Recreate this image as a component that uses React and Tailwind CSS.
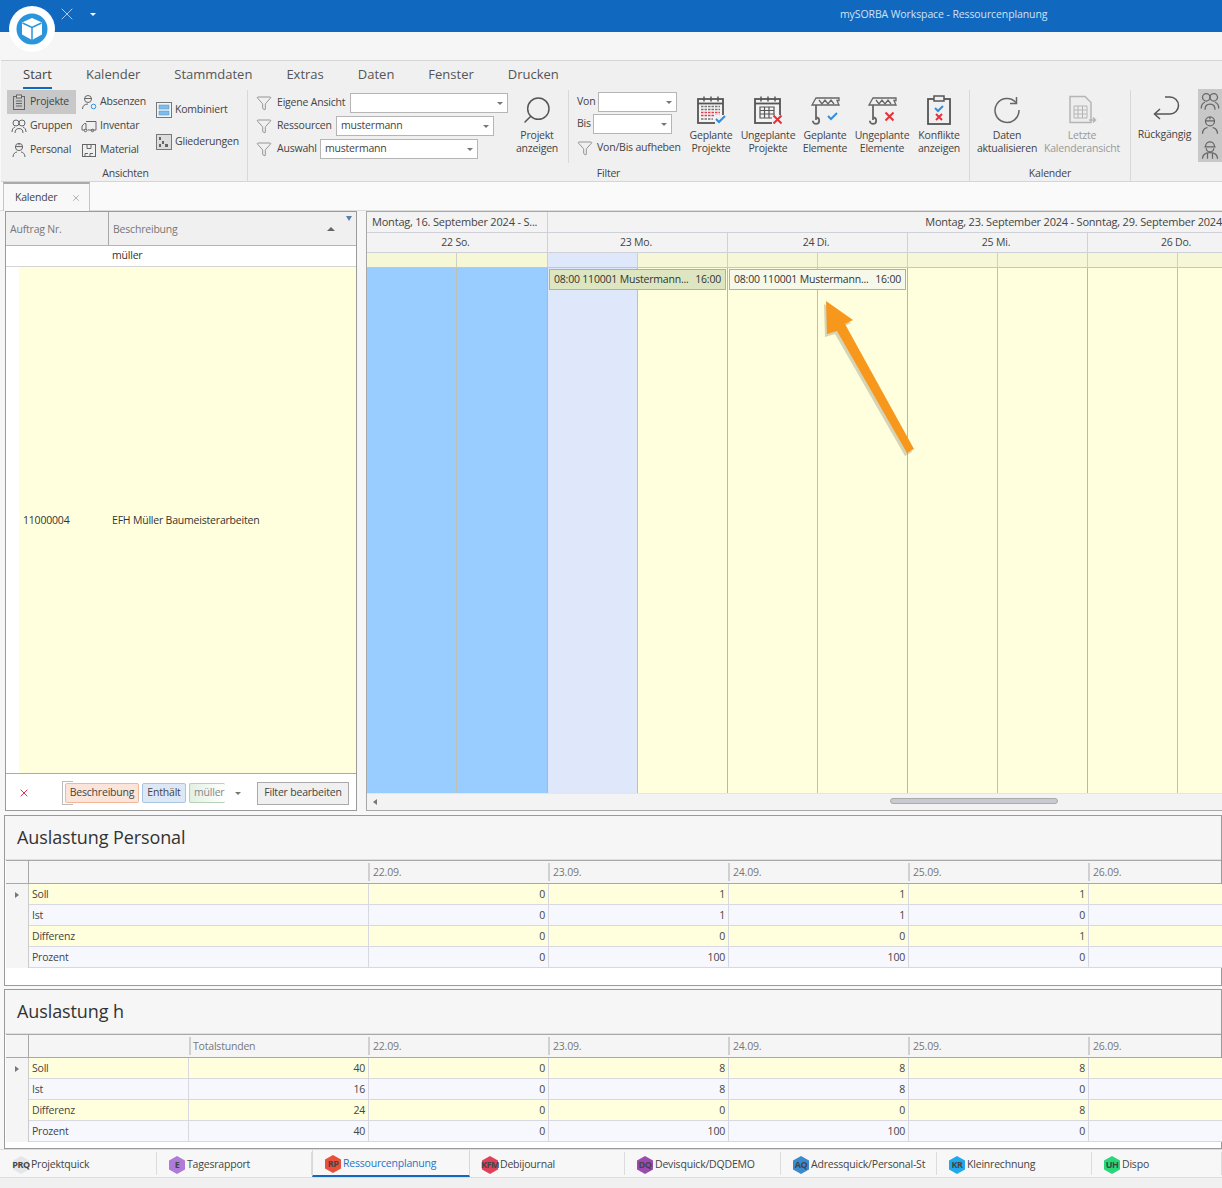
import { Filter, Search, X } from "lucide-react";

function Caret({ className = "" }) {
  return <span className={`w-0 h-0 border-x-[3px] border-x-transparent border-t-[3px] border-t-[#777] ${className}`} />;
}

function Ico({ children, size = 16, className = "" }) {
  return (
    <svg width={size} height={size} viewBox="0 0 16 16" fill="none" stroke="#666" strokeWidth="1" className={`shrink-0 ${className}`}>
      {children}
    </svg>
  );
}

function Person({ size }) {
  return (
    <Ico size={size}>
      <circle cx="8" cy="5" r="3.6" />
      <path d="M4.4 4.6h7.2M8 1.4v2M2 15c0-3.5 2.5-5 4-5M14 15c0-3.5-2.5-5-4-5" />
    </Ico>
  );
}

function Foreman({ size }) {
  return (
    <Ico size={size}>
      <path d="M4.500 5a3.500 3.500 0 0 1 7 0M3.500 5.500h9M5 6.500a3 3 0 0 0 6 0" />
      <path d="M2 15c0-3 2-5 6-5s6 2 6 5M6 10.500V15M10 10.500V15" />
    </Ico>
  );
}

function Group({ size }) {
  return (
    <Ico size={size}>
      <circle cx="5" cy="5" r="3" />
      <circle cx="11" cy="5" r="3" />
      <path d="M1 14c0-3 1.5-4.5 3-5M15 14c0-3-1.500-4.500-3-5M4 15c0-3 1.500-4.500 4-4.500s4 1.500 4 4.500" />
    </Ico>
  );
}

function Clipboard() {
  return (
    <Ico>
      <rect x="2.500" y="2.500" width="11" height="13" />
      <rect x="5.500" y="1" width="5" height="3" fill="#ddd" />
      <path d="M5 7h6M5 9.500h6M5 12h6" />
    </Ico>
  );
}

function Worker() {
  return (
    <Ico>
      <circle cx="7" cy="5" r="3.500" />
      <path d="M3.500 4.500h7M1.500 15c0-3 2-5 5.500-5" />
      <circle cx="12.500" cy="12.500" r="2.300" stroke="#3a8fd6" />
    </Ico>
  );
}

function Truck() {
  return (
    <Ico>
      <path d="M5 3.500h10v8.500H6.500M3.500 12H1V8l2.500-2.500H5V12" />
      <circle cx="4.500" cy="12.500" r="1.300" />
      <circle cx="11.500" cy="12.500" r="1.300" />
    </Ico>
  );
}

function Box() {
  return (
    <Ico>
      <rect x="1.500" y="2.500" width="13" height="12" />
      <path d="M6 2.500v4h4v-4" />
      <path d="M4 14.500v-3h3M9 14.500v-3h3" />
    </Ico>
  );
}

function Combined() {
  return (
    <svg width="16" height="16" viewBox="0 0 16 16" className="shrink-0">
      <rect x="0.500" y="0.500" width="15" height="15" fill="#f4f4f4" stroke="#777" />
      <rect x="3" y="3" width="10" height="4" fill="#7dbcec" stroke="#4a90c8" strokeWidth="0.500" />
      <rect x="3" y="9" width="10" height="4" fill="#7dbcec" stroke="#4a90c8" strokeWidth="0.500" />
    </svg>
  );
}

function Outline() {
  return (
    <svg width="16" height="16" viewBox="0 0 16 16" className="shrink-0">
      <rect x="0.500" y="0.500" width="15" height="15" fill="#ddd" stroke="#777" />
      <path d="M3 3h2v3H3zM6 7h2v3H6zM3 10h2v3H3zM9 10h3v3H9z" fill="#666" />
    </svg>
  );
}

function Mark({ type, x, y }) {
  if (type === "check") return <path d={`M${x - 4} ${y}l3 3 6-6`} stroke="#2f8fe0" strokeWidth="2" fill="none" />;
  return <path d={`M${x - 3.500} ${y - 3.500}l8 8m0-8l-8 8`} stroke="#e8303a" strokeWidth="2" fill="none" />;
}

function Calendar({ dense, mark }) {
  return (
    <svg width="30" height="30" viewBox="0 0 30 30" fill="none" className="shrink-0">
      <rect x="2" y="4" width="25" height="24" stroke="#555" strokeWidth="1.800" fill="#f4f4f4" />
      <path d="M2 8.500h25" stroke="#555" strokeWidth="1.800" />
      <path d="M8 1.500v5M15 1.500v5M22 1.500v5" stroke="#555" strokeWidth="1.500" />
      {dense ? (
        <g>
          <path d="M5 11.500h19M5 14.500h19" stroke="#777" strokeWidth="1.600" strokeDasharray="2.500 1" />
          <path d="M5 17.500h19M5 20.500h19" stroke="#e04050" strokeWidth="1.600" strokeDasharray="2.500 1" />
          <path d="M5 24h12" stroke="#777" strokeWidth="1.600" strokeDasharray="2.500 1" />
        </g>
      ) : (
        <path d="M7 12h14v11H7zM7 15.500h14M7 19h14M11.500 12v11M16 12v11" stroke="#555" strokeWidth="1.200" />
      )}
      <rect x="19" y="20" width="11" height="10" fill="#f0f0f0" />
      <Mark type={mark} x={24} y={24} />
    </svg>
  );
}

function Crane({ mark }) {
  return (
    <svg width="30" height="30" viewBox="0 0 30 30" fill="none" className="shrink-0">
      <path d="M2 10l4-7h23v2.500H27L29 10z" fill="#f0f0f0" stroke="#666" strokeWidth="1.300" />
      <path d="M9 5l3 4 3-4 3 4 3-4 3 4" stroke="#666" strokeWidth="1.300" />
      <path d="M6 10v15" stroke="#666" strokeWidth="1.800" />
      <path d="M6 22.500a3.200 3.200 0 1 1-3.200 3.200" stroke="#666" strokeWidth="1.800" />
      <Mark type={mark} x={22} y={21} />
    </svg>
  );
}

function Conflict() {
  return (
    <svg width="30" height="30" viewBox="0 0 30 30" fill="none" className="shrink-0">
      <rect x="4" y="4" width="22" height="25" stroke="#555" strokeWidth="1.800" />
      <rect x="10" y="1" width="10" height="5" stroke="#555" strokeWidth="1.500" fill="#f0f0f0" />
      <path d="M11 13l3 3 5-5" stroke="#2f8fe0" strokeWidth="2" />
      <path d="M12 19l6 6m0-6l-6 6" stroke="#e8303a" strokeWidth="2" />
    </svg>
  );
}

function Refresh() {
  return (
    <svg width="30" height="30" viewBox="0 0 30 30" fill="none" className="shrink-0">
      <path d="M24 7.500A12 12 0 1 0 27 15" stroke="#666" strokeWidth="1.500" />
      <path d="M24.500 2v6.500H18" stroke="#666" strokeWidth="1.500" />
    </svg>
  );
}

function LastView() {
  return (
    <svg width="30" height="30" viewBox="0 0 30 30" fill="none" className="shrink-0">
      <path d="M3 1.500h15l6 6v20H3z" stroke="#b5b5b5" strokeWidth="1.500" fill="#ededed" />
      <path d="M7 11h13v12H7zM7 15h13M7 19h13M11 11v12M15.500 11v12" stroke="#b5b5b5" />
      <path d="M22 25h6m-2-2.500l2.500 2.500-2.500 2.500" stroke="#b5b5b5" strokeWidth="1.500" />
    </svg>
  );
}

function Undo() {
  return (
    <svg width="30" height="30" viewBox="0 0 30 30" fill="none" className="shrink-0">
      <path d="M15 3h5a6.500 6.500 0 0 1 0 17H5" stroke="#555" strokeWidth="1.500" />
      <path d="M10 15l-5.500 5 5.500 5" stroke="#555" strokeWidth="1.500" />
    </svg>
  );
}

function SmallBtn({ icon, label, active, width }) {
  return (
    <div className={`flex items-center gap-[3px] h-6 pl-1 ${width} ${active ? "bg-[#c8c8c8]" : ""}`}>
      {icon}
      <span className="whitespace-nowrap">{label}</span>
    </div>
  );
}

function BigBtn({ icon, lines, width, disabled }) {
  return (
    <div className={`flex flex-col items-center ${width} ${disabled ? "text-[#999]" : ""}`}>
      <div className="h-[34px] flex items-center mt-[3px]">{icon}</div>
      <div className="mt-[2px] leading-[13px] text-center whitespace-nowrap">
        {lines.map((l) => (
          <div key={l}>{l}</div>
        ))}
      </div>
    </div>
  );
}

function Combo({ label, value, labelWidth }) {
  return (
    <div className="flex items-center h-[22px]">
      <Filter size={16} strokeWidth={1} color="#666" className="shrink-0 mr-[5px]" />
      <span className={`mr-[3px] whitespace-nowrap ${labelWidth}`}>{label}</span>
      <div className="h-5 w-[158px] bg-white border border-[#b5b5b5] flex items-center justify-between px-1">
        <span>{value}</span>
        <Caret />
      </div>
    </div>
  );
}

function Ribbon() {
  return (
    <div className="h-[122px] bg-[#f0f0f0] border-y border-[#d5d5d5] ml-px text-[#444] flex flex-col">
      <div className="h-[28px] pl-[22px] flex items-end gap-[34px] text-[13px] tracking-normal text-[#555] shrink-0">
        {["Start", "Kalender", "Stammdaten", "Extras", "Daten", "Fenster", "Drucken"].map((t, i) => (
          <span key={t} className={`pb-[3px] ${i === 0 ? "border-b-2 border-[#1168bf] text-[#444]" : "border-b-2 border-transparent"}`}>
            {t}
          </span>
        ))}
      </div>
      <div className="flex flex-1 pl-[5px]">
        <div className="w-[242px] shrink-0 flex flex-col border-r border-[#d8d8d8] my-[1px]">
          <div className="flex h-[73px] pl-[1px]">
            <div className="w-[69px]">
              <SmallBtn active icon={<Clipboard />} label="Projekte" width="w-[69px]" />
              <SmallBtn icon={<Group />} label="Gruppen" />
              <SmallBtn icon={<Person />} label="Personal" />
            </div>
            <div className="w-[76px] pl-[1px]">
              <SmallBtn icon={<Worker />} label="Absenzen" />
              <SmallBtn icon={<Truck />} label="Inventar" />
              <SmallBtn icon={<Box />} label="Material" />
            </div>
            <div className="flex flex-col gap-2 pt-2">
              <SmallBtn icon={<Combined />} label="Kombiniert" />
              <SmallBtn icon={<Outline />} label="Gliederungen" />
            </div>
          </div>
          <div className="text-center pr-[2px] mt-[3px]">Ansichten</div>
        </div>

        <div className="w-[722px] shrink-0 flex flex-col border-r border-[#d8d8d8] my-[1px]">
          <div className="flex h-[73px]">
            <div className="w-[260px] pl-[8px] pt-[2px] flex flex-col gap-[1px]">
              <Combo label="Eigene Ansicht" labelWidth="w-[70px]" value="" />
              <Combo label="Ressourcen" labelWidth="w-[56px]" value="mustermann" />
              <Combo label="Auswahl" labelWidth="w-[40px]" value="mustermann" />
            </div>
            <BigBtn width="w-[58px]" lines={["Projekt", "anzeigen"]} icon={<Search size={32} strokeWidth={1.1} color="#555" className="-scale-x-100" />} />
            <div className="w-[114px] ml-[2px] border-l border-[#d8d8d8] pl-2 pt-[1px] text-[#444]">
              <div className="flex items-center h-[22px]">
                <span className="w-5">Von</span>
                <div className="h-5 w-[79px] ml-[1px] bg-white border border-[#b5b5b5] flex items-center justify-end px-1"><Caret /></div>
              </div>
              <div className="flex items-center h-[22px]">
                <span className="w-[15px]">Bis</span>
                <div className="h-5 w-[79px] ml-[1px] bg-white border border-[#b5b5b5] flex items-center justify-end px-1"><Caret /></div>
              </div>
              <div className="flex items-center h-[26px] gap-[4px] whitespace-nowrap">
                <Filter size={16} strokeWidth={1} color="#666" className="shrink-0" />
                Von/Bis aufheben
              </div>
            </div>
            <BigBtn width="w-[58px]" lines={["Geplante", "Projekte"]} icon={<Calendar dense mark="check" />} />
            <BigBtn width="w-[56px]" lines={["Ungeplante", "Projekte"]} icon={<Calendar mark="x" />} />
            <BigBtn width="w-[58px]" lines={["Geplante", "Elemente"]} icon={<Crane mark="check" />} />
            <BigBtn width="w-[56px]" lines={["Ungeplante", "Elemente"]} icon={<Crane mark="x" />} />
            <BigBtn width="w-[58px]" lines={["Konflikte", "anzeigen"]} icon={<Conflict />} />
          </div>
          <div className="text-center mt-[3px]">Filter</div>
        </div>

        <div className="w-[161px] shrink-0 flex flex-col border-r border-[#d8d8d8] my-[1px]">
          <div className="flex h-[73px]">
            <BigBtn width="w-[74px]" lines={["Daten", "aktualisieren"]} icon={<Refresh />} />
            <BigBtn disabled width="w-[76px]" lines={["Letzte", "Kalenderansicht"]} icon={<LastView />} />
          </div>
          <div className="text-center mt-[3px]">Kalender</div>
        </div>

        <BigBtn width="w-[67px]" lines={["Rückgängig"]} icon={<Undo />} />
        <div className="flex-1 h-[73px] bg-[#c8c8c8] flex flex-col items-center justify-around">
          <Group size={20} />
          <Person size={20} />
          <Foreman size={20} />
        </div>
      </div>
    </div>
  );
}

function LeftGrid() {
  return (
    <div className="w-[352px] h-[600px] shrink-0 border border-[#9a9a9a] ml-[5px] flex flex-col bg-white">
      <div className="h-[34px] flex bg-[#f0f0f0] border-b border-[#b5b5b5] text-[#777]">
        <div className="w-[103px] border-r border-[#a8a8a8] flex items-center pl-1 pt-[2px]">Auftrag Nr.</div>
        <div className="flex-1 relative flex items-center pl-1 pt-[2px]">
          Beschreibung
          <span className="absolute right-[21px] top-[15px] w-0 h-0 border-x-[4px] border-x-transparent border-b-[4px] border-b-[#666]" />
          <span className="absolute right-1 top-1 w-0 h-0 border-x-[3px] border-x-transparent border-t-[5px] border-t-[#5b7fa8]" />
        </div>
      </div>
      <div className="h-[21px] border-b border-[#d5d5d5] pl-[106px] flex items-center text-[#333]">müller</div>
      <div className="flex-1 flex">
        <div className="w-[13px]" />
        <div className="flex-1 bg-[#ffffdd] flex items-center pt-[2px] text-[#333]">
          <span className="ml-1 w-[89px]">11000004</span>
          <span>EFH Müller Baumeisterarbeiten</span>
        </div>
      </div>
      <div className="h-[37px] border-t border-[#aaa] flex items-center pt-[2px] text-[#444] bg-white">
        <X size={12} color="#e0304a" strokeWidth={2} className="ml-3 mr-[32px]" />
        <div className="h-6 w-[11px] shrink-0 border-l border-y border-[#bbb]" />
        <div className="flex items-center gap-[3px] -ml-[8px]">
          <span className="h-5 w-[74px] flex items-center justify-center border border-[#f0b898] bg-[#fbe5da] rounded-[2px]">Beschreibung</span>
          <span className="h-5 w-[44px] flex items-center justify-center border border-[#a9c4e4] bg-[#dde8f6] rounded-[2px]">Enthält</span>
          <span className="h-5 w-[36px] px-1 flex items-center border border-[#b4d2b4] border-r-0 bg-gradient-to-r from-[#e2f0e2] to-white text-[#888] rounded-[2px]">müller</span>
        </div>
        <Caret className="ml-[10px]" />
        <div className="ml-[16px] h-[23px] w-[92px] border border-[#aaa] bg-[#f0f0f0] flex items-center justify-center whitespace-nowrap">Filter bearbeiten</div>
      </div>
    </div>
  );
}

const days = [
  { label: "22 So.", w: "w-[181px]", a: "bg-[#99ccff]", b: "bg-[#99ccff]" },
  { label: "23 Mo.", w: "w-[180px]", a: "bg-[#dfe7fb]", b: "bg-[#ffffdd]" },
  { label: "24 Di.", w: "w-[180px]", a: "bg-[#ffffdd]", b: "bg-[#ffffdd]" },
  { label: "25 Mi.", w: "w-[180px]", a: "bg-[#ffffdd]", b: "bg-[#ffffdd]" },
  { label: "26 Do.", w: "w-[180px]", a: "bg-[#ffffdd]", b: "bg-[#ffffdd]" },
];

function Appointment({ className }) {
  return (
    <div className={`absolute top-[1px] h-[21px] w-[177px] border border-[#b0b0a8] flex items-center justify-between px-1 text-[#333] whitespace-nowrap ${className}`}>
      <span>08:00 110001 Mustermann...</span>
      <span>16:00</span>
    </div>
  );
}

function Scheduler() {
  return (
    <div className="flex-1 h-[600px] ml-[9px] border-l border-t border-b border-[#a8a8a8] overflow-hidden flex flex-col text-[#444]">
      <div className="h-[21px] flex bg-[#f3f3f3] border-b border-[#d0d0d8] shrink-0 text-[11px]">
        <div className="w-[181px] shrink-0 border-r border-[#d0d0d8] pl-[5px] flex items-center whitespace-nowrap">Montag, 16. September 2024 - S...</div>
        <div className="flex-1 flex items-center justify-end whitespace-nowrap">Montag, 23. September 2024 - Sonntag, 29. September 2024</div>
      </div>
      <div className="h-[20px] flex bg-[#f3f3f3] border-b border-[#d0d0d8] shrink-0">
        {days.map((d) => (
          <div key={d.label} className={`${d.w} shrink-0 border-r border-[#d0d0d8] flex items-center justify-center pr-[3px]`}>{d.label}</div>
        ))}
      </div>
      <div className="h-[15px] flex shrink-0 border-b border-[#c8c8b8]">
        {days.map((d, i) => (
          <div key={d.label} className={`${d.w} shrink-0 flex border-r border-[#d0d0c0]`}>
            <div className={`w-1/2 border-r border-[#d0d0c0] ${i === 1 ? "bg-[#dfe7fb]" : "bg-[#f5f7d6]"}`} />
            <div className="w-1/2 bg-[#f5f7d6]" />
          </div>
        ))}
      </div>
      <div className="flex-1 relative flex min-h-0">
        {days.map((d) => (
          <div key={d.label} className={`${d.w} shrink-0 flex border-r border-[#b8b8a8]`}>
            <div className={`w-1/2 border-r border-[#c0c0b0] ${d.a}`} />
            <div className={`w-1/2 ${d.b}`} />
          </div>
        ))}
        <Appointment className="left-[182px] bg-[#dde6c0]" />
        <Appointment className="left-[362px] bg-[#f6f9ea]" />
        <svg width="110" height="170" viewBox="0 0 110 170" className="absolute left-[450px] top-[30px]">
          <path d="M9 3 L36 22 L28 26 L97 151 L90 155 L20 33 L10 36 Z" fill="#8a8570" opacity="0.35" transform="translate(-2 3)" />
          <path d="M9 3 L36 22 L28 26 L97 151 L90 155 L20 33 L10 36 Z" fill="#f7981d" />
        </svg>
      </div>
      <div className="h-[17px] shrink-0 bg-[#f3f3f3] border-t border-[#e5e5e5] relative">
        <span className="absolute left-[6px] top-[5px] w-0 h-0 border-y-[3px] border-y-transparent border-r-[4px] border-r-[#777]" />
        <span className="absolute left-[523px] top-[4px] w-[168px] h-[6px] rounded-full bg-[#c9c9d0] border border-[#aaa]" />
      </div>
    </div>
  );
}

function Grid({ title, rows, total, top }) {
  const cols = ["22.09.", "23.09.", "24.09.", "25.09.", "26.09."];
  return (
    <div className={`ml-[4px] border border-[#9a9a9a] bg-white text-[#444] flex flex-col ${top}`}>
      <div className="h-[44px] bg-[#f6f6f6] border-b border-[#e0e0e0] text-[18px] tracking-[-0.1px] text-[#333] flex items-center pl-3 shrink-0">{title}</div>
      <div className="h-[24px] flex bg-[#f5f5f5] border-y border-[#a8a8a8] text-[#777] shrink-0 ml-px">
        <div className="w-[23px] border-r border-[#a8a8a8] shrink-0" />
        {total ? (
          <>
            <div className="w-[160px] shrink-0" />
            <div className="w-[179px] shrink-0 border-l-2 border-[#d0d0d0] my-[2px] pl-[2px] pt-[2px] flex items-center">Totalstunden</div>
          </>
        ) : (
          <div className="w-[339px] shrink-0" />
        )}
        {cols.map((c) => (
          <div key={c} className="w-[180px] shrink-0 border-l-2 border-[#d0d0d0] my-[2px] pl-[3px] pt-[2px] flex items-center">{c}</div>
        ))}
      </div>
      {rows.map((r, i) => (
        <div key={r.name} className="h-[21px] flex ml-px shrink-0">
          <div className="w-[23px] shrink-0 bg-[#f5f5f5] border-r border-[#ccc] flex items-center justify-center">
            {i === 0 && <span className="w-0 h-0 border-y-[3px] border-y-transparent border-l-[4px] border-l-[#777]" />}
          </div>
          <div className={`flex flex-1 border-b border-[#d8d8e0] ${i % 2 === 0 ? "bg-[#ffffdd]" : "bg-[#f7f8fe]"}`}>
            {total ? (
              <>
                <div className="w-[160px] shrink-0 pl-[3px] pt-[2px] flex items-center border-r border-[#d8d8e0]">{r.name}</div>
                <div className="w-[179px] shrink-0 pr-[3px] pt-[2px] flex items-center justify-end">{r.total}</div>
              </>
            ) : (
              <div className="w-[339px] shrink-0 pl-[3px] pt-[2px] flex items-center">{r.name}</div>
            )}
            {r.values.map((v, k) => (
              <div key={k} className="w-[180px] shrink-0 border-l border-[#d8d8e0] pr-[3px] pt-[2px] flex items-center justify-end">{v}</div>
            ))}
            <div className="w-[135px] shrink-0 border-l border-[#d8d8e0]" />
          </div>
        </div>
      ))}
    </div>
  );
}

const personal = [
  { name: "Soll", values: [0, 1, 1, 1] },
  { name: "Ist", values: [0, 1, 1, 0] },
  { name: "Differenz", values: [0, 0, 0, 1] },
  { name: "Prozent", values: [0, 100, 100, 0] },
];

const hours = [
  { name: "Soll", total: 40, values: [0, 8, 8, 8] },
  { name: "Ist", total: 16, values: [0, 8, 8, 0] },
  { name: "Differenz", total: 24, values: [0, 0, 0, 8] },
  { name: "Prozent", total: 40, values: [0, 100, 100, 0] },
];

const tabs = [
  { code: "PRQ", name: "Projektquick", color: "#e4e6e8", w: "w-[156px]" },
  { code: "E", name: "Tagesrapport", color: "#b07ad8", w: "w-[155px]" },
  { code: "RP", name: "Ressourcenplanung", color: "#e8503a", w: "w-[158px]", active: true },
  { code: "KFM", name: "Debijournal", color: "#e0405a", w: "w-[155px]" },
  { code: "DQ", name: "Devisquick/DQDEMO", color: "#9c4ab0", w: "w-[156px]" },
  { code: "AQ", name: "Adressquick/Personal-St", color: "#3a8ad0", w: "w-[156px]" },
  { code: "KR", name: "Kleinrechnung", color: "#20a8ec", w: "w-[155px]" },
  { code: "UH", name: "Dispo", color: "#28d878", w: "w-[130px]" },
];

function BottomTabs() {
  return (
    <div className="h-[29px] pl-[1px] flex bg-[#f7f7f7] border-y border-[#dcdcdc] text-[#444] shrink-0">
      {tabs.map((t) => (
        <div
          key={t.code}
          className={`${t.w} shrink-0 flex items-center pl-[11px] pt-[2px] gap-[1px] whitespace-nowrap ${t.active ? "border-x border-[#d8d8d8] border-b-2 border-b-[#1168bf] text-[#1f74c8]" : "border-r border-[#dcdcdc] my-[2px]"}`}
        >
          <span className="relative w-[18px] h-[18px] shrink-0 flex items-center justify-center">
            <svg width="18" height="18" viewBox="0 0 18 18" className="absolute inset-0">
              <polygon points="9,0 17,4.500 17,13.500 9,18 1,13.500 1,4.500" fill={t.color} />
            </svg>
            <span className="relative text-[9px] tracking-[-0.5px] font-bold text-[#444]">{t.code}</span>
          </span>
          {t.name}
        </div>
      ))}
    </div>
  );
}

export default function App() {
  return (
    <div className="w-[1222px] h-[1188px] overflow-hidden bg-[#f8f8f8] relative flex flex-col font-['Open_Sans',sans-serif] text-[10.5px] tracking-[-0.2px]">
      <div className="h-[32px] bg-[#1168bf] shrink-0 flex text-white">
        <X size={20} strokeWidth={1} color="#cfe2f5" className="ml-[57px] mt-[4px]" />
        <span className="ml-[13px] mt-[13px] w-0 h-0 border-x-[3px] border-x-transparent border-t-[3px] border-t-white" />
        <span className="ml-[744px] mt-[7px] text-[#cfe2f5] tracking-[-0.1px] whitespace-nowrap">mySORBA Workspace - Ressourcenplanung</span>
      </div>
      <div className="absolute left-[9px] top-[6px] w-[46px] h-[46px] rounded-full bg-white flex items-center justify-center">
        <svg width="34" height="34" viewBox="0 0 34 34">
          <circle cx="17" cy="17" r="15.500" fill="#2a94dc" />
          <path d="M17 6l10 4.500v12L17 28 7 22.500v-12z" fill="#fff" />
          <path d="M7.500 11L17 15.500 26.500 11M17 15.500V28" stroke="#2a94dc" strokeWidth="1.500" fill="none" />
        </svg>
      </div>
      <div className="h-[28px] bg-[#f6f6f6] shrink-0" />
      <Ribbon />
      <div className="h-[29px] flex shrink-0 pl-[3px] bg-[#fafafa] border-b border-[#ddd]">
        <div className="w-[87px] h-[29px] bg-[#f8f8f8] border-x border-t-2 border-[#c5c5c5] border-t-[#aaa] flex items-center pl-[11px] text-[#444] gap-[14px]">
          Kalender
          <X size={10} color="#777" strokeWidth={1.300} />
        </div>
      </div>
      <div className="flex shrink-0 bg-[#f6f6f6]">
        <LeftGrid />
        <Scheduler />
      </div>
      <Grid title="Auslastung Personal" rows={personal} top="mt-[4px] h-[171px]" />
      <Grid title="Auslastung h" rows={hours} total top="mt-[3px] h-[160px]" />
      <BottomTabs />
      <div className="flex-1 bg-[#f0f0f0]" />
    </div>
  );
}
